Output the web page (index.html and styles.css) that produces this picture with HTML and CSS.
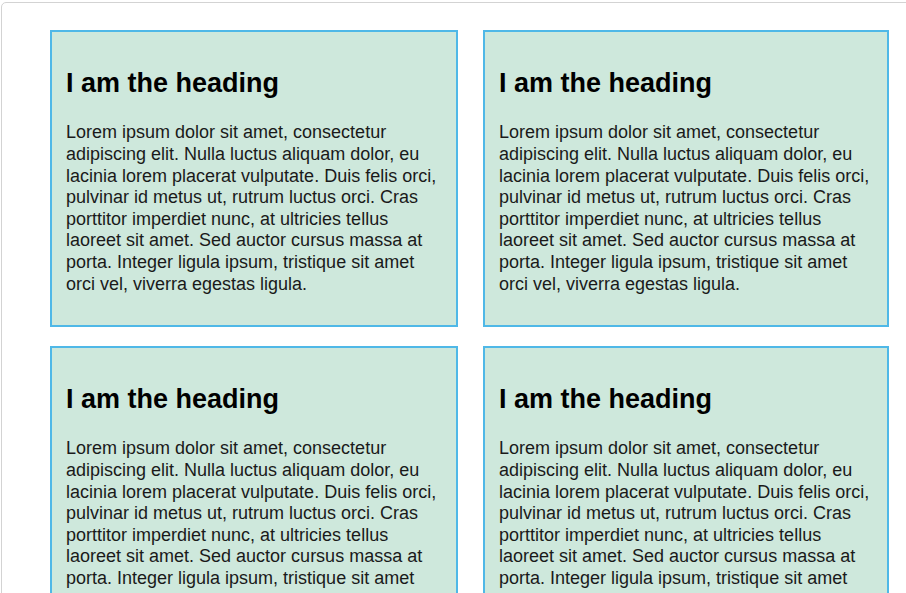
FILE: index.html
```html
<!DOCTYPE html>
<html>
<head>
<meta charset="utf-8">
<link rel="stylesheet" href="styles.css">
</head>
<body>
<div class="frame">
  <div class="grid">
    <div class="card">
      <h2>I am the heading</h2>
      <p>Lorem ipsum dolor sit amet, consectetur adipiscing elit. Nulla luctus aliquam dolor, eu lacinia lorem placerat vulputate. Duis felis orci, pulvinar id metus ut, rutrum luctus orci. Cras porttitor imperdiet nunc, at ultricies tellus laoreet sit amet. Sed auctor cursus massa at porta. Integer ligula ipsum, tristique sit amet orci vel, viverra egestas ligula.</p>
    </div>
    <div class="card">
      <h2>I am the heading</h2>
      <p>Lorem ipsum dolor sit amet, consectetur adipiscing elit. Nulla luctus aliquam dolor, eu lacinia lorem placerat vulputate. Duis felis orci, pulvinar id metus ut, rutrum luctus orci. Cras porttitor imperdiet nunc, at ultricies tellus laoreet sit amet. Sed auctor cursus massa at porta. Integer ligula ipsum, tristique sit amet orci vel, viverra egestas ligula.</p>
    </div>
    <div class="card">
      <h2>I am the heading</h2>
      <p>Lorem ipsum dolor sit amet, consectetur adipiscing elit. Nulla luctus aliquam dolor, eu lacinia lorem placerat vulputate. Duis felis orci, pulvinar id metus ut, rutrum luctus orci. Cras porttitor imperdiet nunc, at ultricies tellus laoreet sit amet. Sed auctor cursus massa at porta. Integer ligula ipsum, tristique sit amet orci vel, viverra egestas ligula.</p>
    </div>
    <div class="card">
      <h2>I am the heading</h2>
      <p>Lorem ipsum dolor sit amet, consectetur adipiscing elit. Nulla luctus aliquam dolor, eu lacinia lorem placerat vulputate. Duis felis orci, pulvinar id metus ut, rutrum luctus orci. Cras porttitor imperdiet nunc, at ultricies tellus laoreet sit amet. Sed auctor cursus massa at porta. Integer ligula ipsum, tristique sit amet orci vel, viverra egestas ligula.</p>
    </div>
  </div>
</div>
</body>
</html>
```
FILE: styles.css
```css
html, body {
  margin: 0;
  padding: 0;
  background: #ffffff;
  overflow: hidden;
}
body {
  font-family: "Liberation Sans", Arial, sans-serif;
  color: #1a1a1a;
}
.frame {
  margin: 2px 0 0 1px;
  width: 1000px;
  border: 1px solid #d3d3d3;
  border-radius: 5px;
  padding: 27px 0 40px 48px;
  box-sizing: border-box;
}
.grid {
  display: grid;
  grid-template-columns: 408px 406px;
  column-gap: 25px;
  row-gap: 19px;
}
.card {
  background: #cee8dc;
  border: 2px solid #4fb8e7;
  padding: 35px 14px 30px 14px;
  box-sizing: border-box;
  height: 297px;
}
.card h2 {
  margin: 0 0 23px;
  font-size: 27px;
  line-height: 32.4px;
  font-weight: bold;
  color: #000000;
}
.card p {
  margin: 0;
  font-size: 18px;
  line-height: 21.6px;
  color: #1a1a1a;
}
```
